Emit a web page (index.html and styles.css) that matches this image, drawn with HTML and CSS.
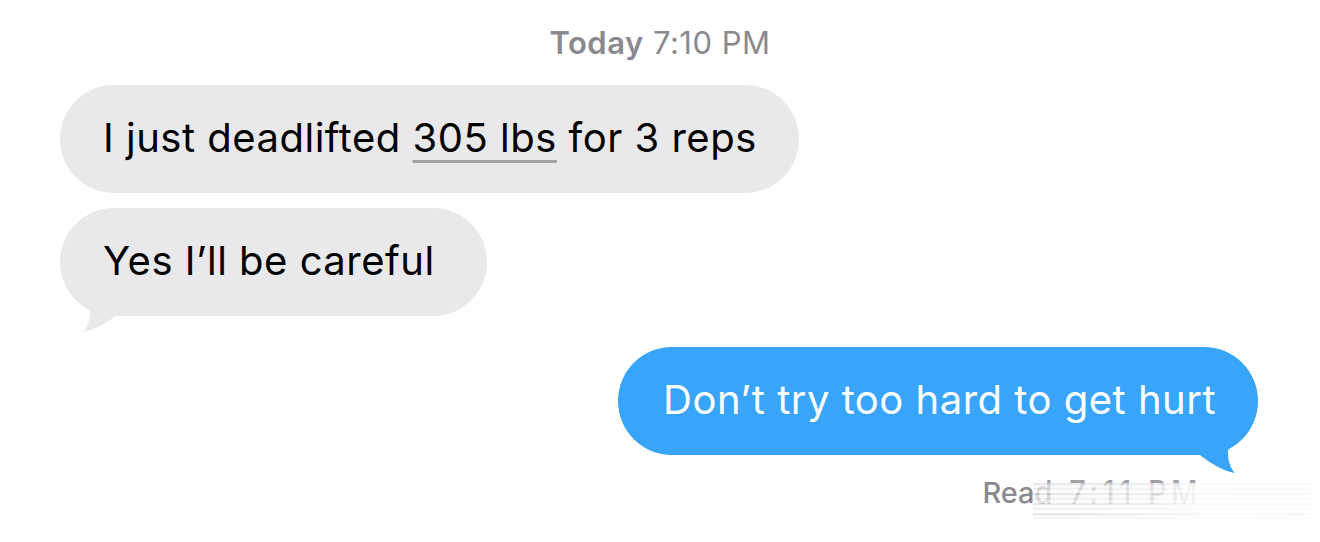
FILE: index.html
```html
<!DOCTYPE html>
<html lang="en">
<head>
<meta charset="UTF-8">
<meta name="viewport" content="width=device-width, initial-scale=1.0">
<title>Messages</title>
<link rel="stylesheet" href="styles.css">
</head>
<body>
<div class="thread">
<div class="stamp"><strong>Today</strong> 7:10 PM</div>

<div class="bubble them">I just deadlifted <span class="link">305 lbs</span> for 3 reps</div>

<div class="bubble them last">Yes I’ll be careful
<svg class="tail" width="70" height="60" viewBox="0 0 70 60"><path d="M3,3 C15,23 30,28 30,38 C30,48 26,55 23,58 C35,56 48,48 58,40 L58,3 Z"/></svg>
</div>

<div class="bubble me last">Don’t try too hard to get hurt
<svg class="tail" width="70" height="60" viewBox="0 0 70 60"><path d="M3,3 C15,23 30,28 30,38 C30,48 26,55 23,58 C35,56 48,48 58,40 L58,3 Z"/></svg>
</div>

<div class="receipt">
<span>Rea</span><span class="ghost">d 7:11 PM</span>
<span class="smear"></span>
</div>
</div>
</body>
</html>
```

FILE: styles.css
```css
body {
margin: 0;
background: #fff;
font-family: "Inter", "Noto Sans", sans-serif;
}

.thread {
display: flex;
flex-direction: column;
padding-top: 22px;
height: 542px;
box-sizing: border-box;
overflow: hidden;
}

.stamp {
align-self: center;
font-size: 31px;
letter-spacing: 0.5px;
color: #8a8a8e;
height: 42px;
line-height: 42px;
margin-bottom: 21px;
}

.stamp strong {
font-weight: 600;
}

.bubble {
position: relative;
height: 108px;
line-height: 106px;
padding: 0 42px 0 43px;
border-radius: 54px;
font-size: 40px;
letter-spacing: 0.5px;
white-space: nowrap;
}

.them {
align-self: flex-start;
margin-left: 60px;
background: #e9e9eb;
color: #000;
margin-bottom: 15px;
}

.them.last {
margin-bottom: 31px;
padding-right: 52px;
}

.me {
align-self: flex-end;
margin-right: 62px;
padding-left: 45px;
background: #38a5fa;
color: #fff;
}

.tail {
position: absolute;
left: 0;
bottom: -18px;
}

.them .tail path {
fill: #e9e9eb;
}

.me .tail {
left: auto;
right: 0;
transform: scaleX(-1);
bottom: -20px;
}

.me .tail path {
fill: #38a5fa;
}

.link {
text-decoration: underline;
text-decoration-color: #a3a3a6;
text-decoration-thickness: 3px;
text-underline-offset: 8px;
}

.receipt {
position: relative;
align-self: flex-end;
margin-right: 118px;
margin-top: 18px;
font-size: 29px;
font-weight: 500;
color: #8a8a8e;
line-height: 40px;
white-space: nowrap;
}

.ghost {
display: inline-block;
letter-spacing: 4.5px;
color: #a2a2a6;
transform: scaleY(1.12);
}

.smear {
position: absolute;
left: 51px;
top: 10px;
width: 278px;
height: 36px;
background:
linear-gradient(90deg, rgba(255,255,255,0.1), rgba(255,255,255,0.45) 45%, rgba(255,255,255,0.8) 60%, rgba(255,255,255,0.75)),
repeating-linear-gradient(180deg, rgba(200,200,203,0.5) 0 2px, rgba(244,244,245,0.6) 2px 5px, rgba(226,226,228,0.6) 5px 7px, rgba(255,255,255,0.7) 7px 10px);
}
```
